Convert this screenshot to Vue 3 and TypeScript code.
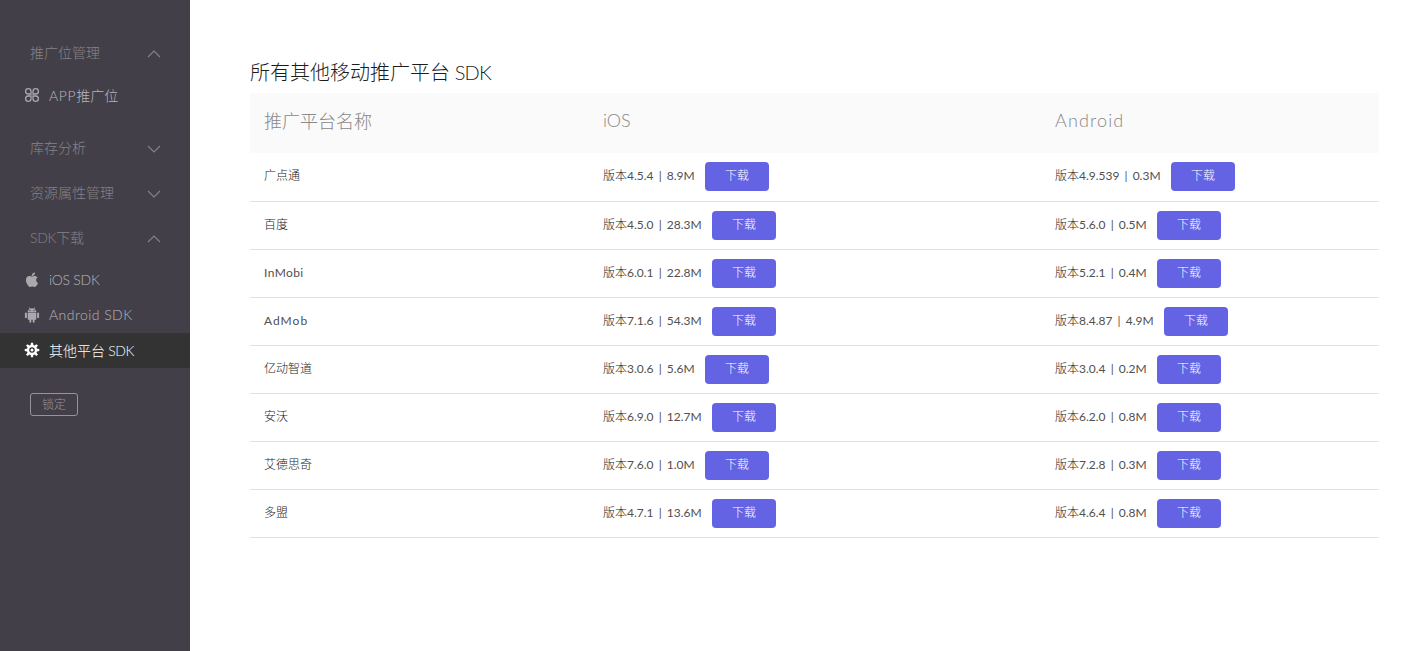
<script setup lang="ts">
interface Release { version: string; size: string }
interface Platform { name: string; tone?: string; ios: Release; android: Release }

const rel = (version: string, size: string): Release => ({ version, size })

const platforms: Platform[] = [
  { name: '广点通', ios: rel('4.5.4', '8.9M'), android: rel('4.9.539', '0.3M') },
  { name: '百度', ios: rel('4.5.0', '28.3M'), android: rel('5.6.0', '0.5M') },
  { name: 'InMobi', tone: 'en snug', ios: rel('6.0.1', '22.8M'), android: rel('5.2.1', '0.4M') },
  { name: 'AdMob', tone: 'en loose', ios: rel('7.1.6', '54.3M'), android: rel('8.4.87', '4.9M') },
  { name: '亿动智道', ios: rel('3.0.6', '5.6M'), android: rel('3.0.4', '0.2M') },
  { name: '安沃', ios: rel('6.9.0', '12.7M'), android: rel('6.2.0', '0.8M') },
  { name: '艾德思奇', ios: rel('7.6.0', '1.0M'), android: rel('7.2.8', '0.3M') },
  { name: '多盟', ios: rel('4.7.1', '13.6M'), android: rel('4.6.4', '0.8M') },
]

const labelWidth = (r: Release): string => {
  const chars = r.version + r.size
  const dots = chars.split('.').length - 1
  const digits = chars.length - dots - 1
  const extra = digits - 5 - (dots - 3)
  return `${92 + extra * 7}px`
}
</script>

<template>
  <div class="page">
    <aside class="sidebar">
      <div class="group first">
        <span class="title">推广位管理</span>
        <svg class="chevron" viewBox="0 0 14 8"><path d="M1 7 7 1l6 6" /></svg>
      </div>
      <div class="item app">
        <svg class="icon line" viewBox="0 0 16 16">
          <path d="M7 7H4.2A2.7 2.7 0 1 1 7 4.2zM9 7V4.2A2.7 2.7 0 1 1 11.8 7zM7 9v2.8A2.7 2.7 0 1 1 4.2 9zM9 9h2.8A2.7 2.7 0 1 1 9 11.8z" />
        </svg>
        <span><span class="en app-latin">APP</span>推广位</span>
      </div>
      <div class="group second">
        <span class="title">库存分析</span>
        <svg class="chevron" viewBox="0 0 14 8"><path d="m1 1 6 6 6-6" /></svg>
      </div>
      <div class="group">
        <span class="title">资源属性管理</span>
        <svg class="chevron" viewBox="0 0 14 8"><path d="m1 1 6 6 6-6" /></svg>
      </div>
      <div class="group">
        <span class="title"><span class="en sdk">SDK</span>下载</span>
        <svg class="chevron" viewBox="0 0 14 8"><path d="M1 7 7 1l6 6" /></svg>
      </div>
      <div class="item ios">
        <svg class="icon" viewBox="0 0 16 16">
          <path d="M10.900.4c.1 1.100-.3 2-.9 2.700-.6.7-1.400 1.100-2.300 1-.1-1 .3-1.900.9-2.600.6-.6 1.500-1.100 2.300-1.100zM13.600 5.500c-1 .6-1.500 1.500-1.500 2.600 0 1.300.8 2.400 1.900 2.800-.3 1-.8 1.900-1.400 2.700-.6.8-1.200 1.500-2 1.500-.9 0-1.200-.5-2.300-.5s-1.400.5-2.200.5c-.8 0-1.500-.8-2.100-1.600C2.800 11.800 1.900 9.800 1.900 8c0-2.600 1.700-4 3.400-4 1 0 1.900.6 2.600.6.6 0 1.700-.7 2.900-.7 1.100 0 2.200.6 2.800 1.600z" />
        </svg>
        <span class="en ios-latin">iOS SDK</span>
      </div>
      <div class="item">
        <svg class="icon" viewBox="0 0 16 16">
          <path d="M3.600 5C3.700 3.500 4.500 2.500 5.600 1.900L4.800.4l.5-.2.9 1.400a5.200 5.200 0 0 1 3.600 0l.9-1.400.5.2-.8 1.500c1.100.6 1.900 1.600 2 3.100zM6 2.900a.7.7 0 1 0 0 1.400.7.7 0 0 0 0-1.400zm4 0a.7.7 0 1 0 0 1.400.7.7 0 0 0 0-1.400zM3.700 5.600h8.600v6.200c0 .6-.4 1-1 1h-.7v2a.9.9 0 0 1-1.900 0v-2H7.300v2a.9.9 0 0 1-1.900 0v-2h-.7c-.6 0-1-.4-1-1z" fill-rule="evenodd" />
          <rect x=".9" y="5.600" width="2" height="5.600" rx="1" /><rect x="13.100" y="5.600" width="2" height="5.600" rx="1" />
        </svg>
        <span class="en android-latin">Android SDK</span>
      </div>
      <div class="item active">
        <svg class="icon" viewBox="0 0 16 16">
          <path fill-rule="evenodd" d="M7 .8h2l.4 2.300 1.200.5 1.900-1.400 1.400 1.400-1.400 1.900.5 1.200 2.300.4v2l-2.300.4-.5 1.200 1.400 1.900-1.400 1.400-1.900-1.400-1.200.5L9 15.300H7l-.4-2.200-1.200-.5L3.500 14l-1.400-1.400 1.400-1.900L3 9.500.7 9.100v-2L3 6.700l.5-1.200-1.400-1.900 1.400-1.400 1.900 1.400 1.200-.5zM8 5.200a2.800 2.800 0 1 0 0 5.600 2.800 2.800 0 0 0 0-5.600z" />
          <circle cx="8" cy="8" r="1.500" />
        </svg>
        <span>其他平台<span class="en other-latin"> SDK</span></span>
      </div>
      <button class="lock">锁定</button>
    </aside>

    <main class="content">
      <h1>所有其他移动推广平台<span class="en heading-latin"> SDK</span></h1>
      <div class="table">
        <div class="row head">
          <div>推广平台名称</div>
          <div class="en">iOS</div>
          <div class="en wide">Android</div>
        </div>
        <div v-for="p in platforms" :key="p.name" class="row">
          <div :class="p.tone">{{ p.name }}</div>
          <div v-for="(r, i) in [p.ios, p.android]" :key="i" class="cell">
            <span class="label" :style="{ width: labelWidth(r) }">版本<span class="en">{{ r.version }} | {{ r.size }}</span></span>
            <button class="download">下载</button>
          </div>
        </div>
      </div>
    </main>
  </div>
</template>

<style>
body { margin: 0; background: #fff; }
</style>

<style scoped>
* { box-sizing: border-box; }
.page {
  display: flex;
  height: 651px;
  font-family: "Liberation Sans", "Noto Sans CJK SC", sans-serif;
  font-weight: 300;
  color: #1c1c1c;
}
.en { font-family: Lato, "Noto Sans CJK SC", sans-serif; white-space: pre; }
button { font: inherit; cursor: pointer; padding: 0; }

.sidebar {
  width: 190px;
  flex: none;
  background: #433f48;
  padding-top: 30px;
  font-size: 14px;
}
.group {
  height: 45px;
  display: flex;
  align-items: center;
  justify-content: space-between;
  padding: 0 29px 0 30px;
  color: #858387;
}
.title { padding-bottom: 2px; }
.group.second { margin-top: 13px; }
.sdk { letter-spacing: -0.3px; }
.app-latin { letter-spacing: 0.6px; }
.ios-latin { letter-spacing: -0.25px; }
.android-latin { letter-spacing: 0.45px; }
.other-latin { letter-spacing: -0.5px; }
.heading-latin { letter-spacing: -0.8px; }
.chevron {
  width: 14px;
  height: 8px;
  margin-top: 2px;
  fill: none;
  stroke: #85838a;
  stroke-width: 1.1;
}
.item {
  height: 35px;
  display: flex;
  align-items: center;
  gap: 9px;
  padding: 0 0 2px 24px;
  color: #b8b6bb;
}
.item.app { margin-top: 2px; padding-bottom: 0; }
.item.ios { margin-top: 3px; }
.icon { width: 16px; height: 16px; fill: #aaa8ad; }
.icon.line { fill: none; stroke: #aaa8ad; stroke-width: 1.3; }
.item.active { background: #333; color: #fff; }
.item.active .icon { fill: #fff; }
.lock {
  display: block;
  width: 48px;
  height: 23px;
  margin: 25px 0 0 30px;
  border: 1px solid #969499;
  border-radius: 3px;
  background: transparent;
  color: #98969b;
  font-size: 12px;
  line-height: 20px;
}

.content { flex: 1; padding: 57px 47px 0 60px; }
h1 {
  margin: 0;
  height: 36px;
  font-size: 20px;
  font-weight: 300;
  line-height: 30px;
}
.row {
  display: grid;
  grid-template-columns: 339px 452px 1fr;
  height: 48px;
  padding-left: 14px;
  padding-bottom: 4px;
  align-items: center;
  border-bottom: 1px solid #e2e2e2;
  font-size: 12px;
}
.row:not(.head) .en { font-weight: 400; color: #505050; }
.head {
  height: 60px;
  padding-bottom: 6px;
  background: #fafafa;
  border: 0;
  color: #888;
  font-size: 18px;
}
.head + .row { height: 49px; padding-bottom: 5px; }
.wide { letter-spacing: 1.15px; }
.snug { letter-spacing: 0.4px; padding-top: 1px; }
.loose { letter-spacing: 1px; padding-top: 1px; }
.cell { display: flex; align-items: center; height: 29px; }
.label { white-space: nowrap; }
.label .en { word-spacing: 2px; }
.download {
  width: 64px;
  height: 29px;
  margin: 4px 0 0 10px;
  border: 0;
  border-radius: 4px;
  background: #6463e4;
  color: #fff;
  font-size: 12px;
  line-height: 27px;
}
</style>
